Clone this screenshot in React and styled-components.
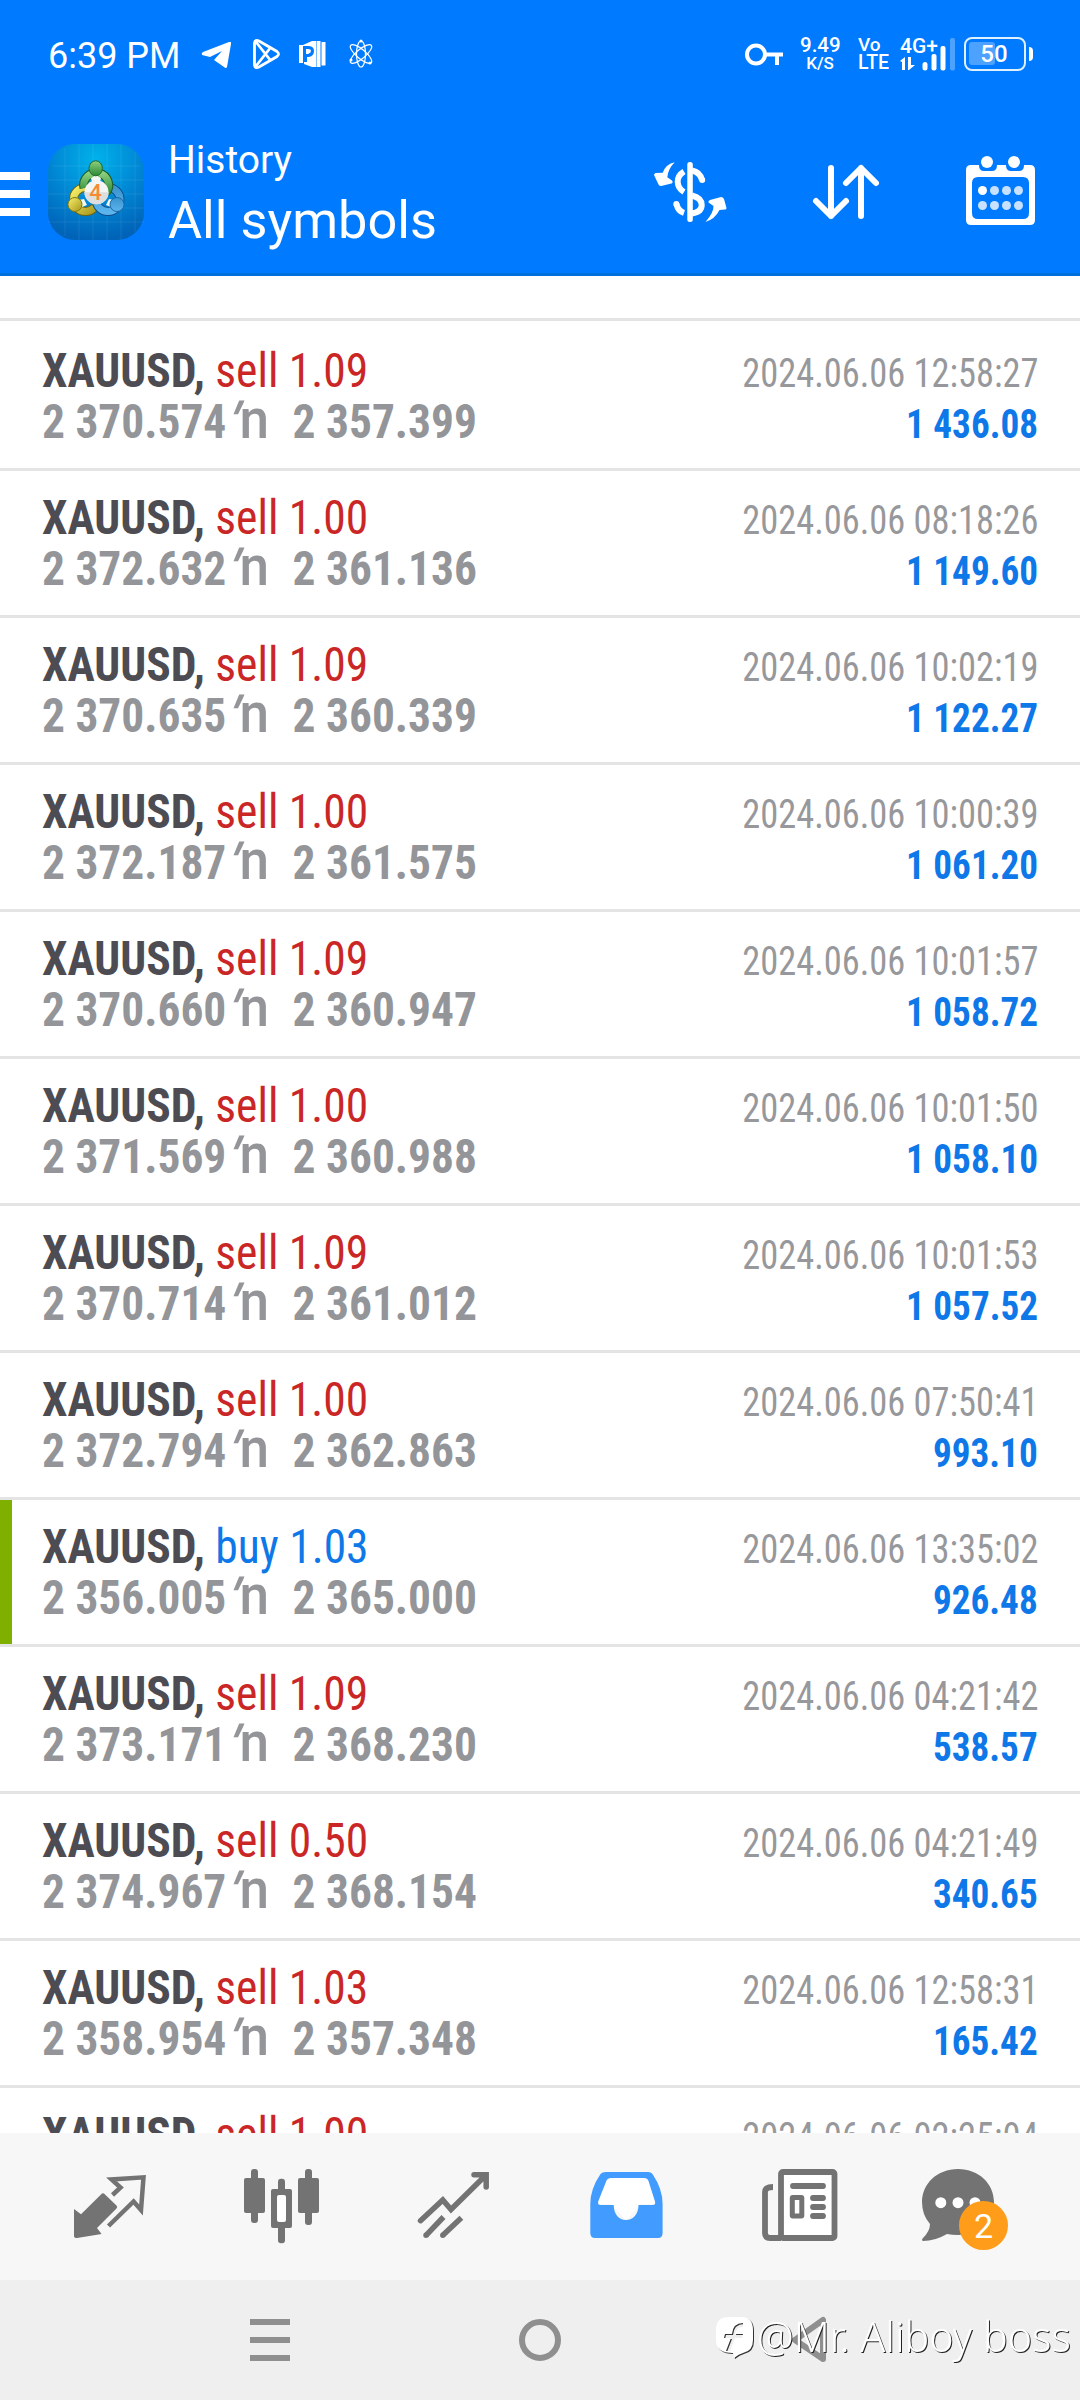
import React from 'react'
import styled, { createGlobalStyle } from 'styled-components'

const GlobalStyle = createGlobalStyle`
  body {
    margin: 0;
    font-family: Roboto, sans-serif;
  }
`

const Screen = styled.div`
  display: flex;
  flex-direction: column;
  width: 1080px;
  height: 2400px;
  overflow: hidden;
  background: #fff;
`

const Header = styled.header`
  flex: 0 0 273px;
  border-bottom: 3px solid #0070dd;
  background: #007aff;
  color: #fff;
`

const StatusBar = styled.div`
  display: flex;
  align-items: center;
  height: 108px;
  padding: 0 54px 0 48px;
`

const Clock = styled.span`
  width: 153px;
  margin-top: 4px;
  font-size: 36px;
  line-height: 42px;
  white-space: nowrap;
`

const StatusIcon = styled.svg`
  flex: none;
  width: ${({w}) => w}px;
  height: 36px;
  margin-left: ${({gap}) => gap || 0}px;
  overflow: visible;
`

const Spacer = styled.div`
  flex: 1;
`

const Stack = styled.div`
  display: flex;
  flex-direction: column;
  width: ${({w}) => w}px;
  margin-left: ${({gap}) => gap}px;
  text-align: ${({align}) => align || 'left'};
`

const Tiny = styled.span`
  font-size: ${({size}) => size}px;
  font-weight: 500;
  line-height: 18px;
  white-space: nowrap;
`

const Battery = styled.div`
  position: relative;
  display: flex;
  align-items: center;
  justify-content: center;
  box-sizing: border-box;
  width: 62px;
  height: 34px;
  margin-left: 9px;
  padding-right: 2px;
  border: 2.5px solid #dff0ff;
  border-radius: 8px;
  font-size: 24px;
  font-weight: 500;

  &::before {
    content: '';
    position: absolute;
    top: 3px;
    left: 3px;
    width: 26px;
    height: 23px;
    border-radius: 3px;
    background: rgba(255, 255, 255, 0.3);
  }

  &::after {
    content: '';
    position: absolute;
    top: 8px;
    right: -9px;
    width: 4px;
    height: 14px;
    border-radius: 0 4px 4px 0;
    background: #fff;
  }
`

const Toolbar = styled.div`
  display: flex;
  align-items: center;
  height: 165px;
  box-sizing: border-box;
  padding-right: 44px;
  padding-bottom: 1px;
`

const Burger = styled.div`
  display: flex;
  flex-direction: column;
  gap: 10px;
  width: 30px;
  margin-top: 8px;

  i {
    height: 8px;
    background: #fff;
  }
`

const AppLogo = styled.svg`
  width: 96px;
  height: 96px;
  margin-top: 4px;
  margin-left: 18px;
`

const Titles = styled.div`
  flex: 1;
  margin-top: 11px;
  margin-left: 24px;
`

const Subtitle = styled.div`
  font-size: 39px;
  line-height: 50px;
`

const Title = styled.div`
  font-size: 52.3px;
  line-height: 71px;
`

const Action = styled.svg`
  width: 74px;
  height: 74px;
  margin-top: 4px;
  margin-left: ${({gap}) => gap || 0}px;
  overflow: visible;
`

const List = styled.main`
  flex: 1;
  min-height: 0;
  overflow: hidden;
  padding-top: 42px;
`

const Row = styled.article`
  box-sizing: border-box;
  height: 147px;
  padding: 21px 42px 0;
  border-bottom: 3px solid #e4e4e4;
  box-shadow: ${({$marked}) => $marked ? 'inset 12px 0 0 #7fb000' : 'none'};

  &:first-child {
    height: 153px;
    border-top: 3px solid #e4e4e4;
    padding-top: 24px;
  }
`

const Line = styled.div`
  display: flex;
  align-items: baseline;
  justify-content: space-between;
  height: 51px;
  line-height: 51px;
  white-space: nowrap;
`

// condensed cut of Roboto, squeezed slightly further
const Narrow = styled.div`
  font-size: ${({size}) => size}px;
  font-stretch: 75%;
  transform: scaleX(${({scale}) => scale});
  transform-origin: ${({side}) => side || 'left'};
`

const Symbol = styled.b`
  color: #4d4c52;
`

const Deal = styled.span`
  color: ${({side}) => side === 'buy' ? '#0f78e8' : '#cb2626'};
`

const Prices = styled(Narrow)`
  color: #949599;
  font-weight: 700;
`

const Arrow = styled.span`
  margin: 0 25px 0 3px;
  font-size: 56px;
  font-stretch: 100%;
  font-weight: 500;
  line-height: 1px;
`

const Tick = styled.span`
  display: inline-block;
  margin-right: 3px;
  font-size: 50px;
  font-weight: 800;
  transform: skewX(-24deg);
`

const Time = styled(Narrow)`
  color: #97989b;
`

const Profit = styled(Narrow)`
  color: #0f78e8;
  font-weight: 700;
`

const TabBar = styled.nav`
  display: flex;
  flex: 0 0 147px;
  align-items: center;
  justify-content: space-between;
  padding: 0 68px;
  background: #f7f7f7;
`

const Tab = styled.div`
  position: relative;
  width: 84px;
  height: 84px;
  color: ${({$active}) => $active ? '#429bff' : '#737373'};

  svg {
    display: block;
    width: 84px;
    height: 84px;
    overflow: visible;
  }
`

const Badge = styled.span`
  position: absolute;
  top: 36px;
  left: 31px;
  width: 49px;
  height: 49px;
  border-radius: 50%;
  background: #ff9d1a;
  color: #fff;
  font-size: 34px;
  line-height: 50px;
  text-align: center;
`

const SystemBar = styled.footer`
  position: relative;
  display: flex;
  flex: 0 0 120px;
  align-items: center;
  justify-content: space-between;
  box-sizing: border-box;
  padding: 0 246px;
  background: #efefef;

  svg {
    width: 48px;
    height: 48px;
    color: #8f8f8f;
  }
`

const Watermark = styled.div`
  position: absolute;
  top: 32px;
  left: 715px;
  display: flex;
  align-items: center;
  color: #fff;
  font-family: 'Noto Sans', sans-serif;
  font-size: 41.3px;
  font-weight: 300;
  line-height: 48px;
  text-shadow: 1px 1px 0.5px #222;
  white-space: nowrap;
  will-change: transform;

  svg {
    width: 40px;
    height: 46px;
    margin-right: 2px;
    filter: drop-shadow(1px 1px 0.5px #333);
  }
`

const trades = [
  ['sell', '1.09', '2 370.574', '2 357.399', '12:58:27', '1 436.08'],
  ['sell', '1.00', '2 372.632', '2 361.136', '08:18:26', '1 149.60'],
  ['sell', '1.09', '2 370.635', '2 360.339', '10:02:19', '1 122.27'],
  ['sell', '1.00', '2 372.187', '2 361.575', '10:00:39', '1 061.20'],
  ['sell', '1.09', '2 370.660', '2 360.947', '10:01:57', '1 058.72'],
  ['sell', '1.00', '2 371.569', '2 360.988', '10:01:50', '1 058.10'],
  ['sell', '1.09', '2 370.714', '2 361.012', '10:01:53', '1 057.52'],
  ['sell', '1.00', '2 372.794', '2 362.863', '07:50:41', '993.10'],
  ['buy', '1.03', '2 356.005', '2 365.000', '13:35:02', '926.48'],
  ['sell', '1.09', '2 373.171', '2 368.230', '04:21:42', '538.57'],
  ['sell', '0.50', '2 374.967', '2 368.154', '04:21:49', '340.65'],
  ['sell', '1.03', '2 358.954', '2 357.348', '12:58:31', '165.42'],
  ['sell', '1.00', '', '', '02:25:04', ''],
]

const Trade = ({trade}) => {
  const [side, volume, open, close, time, profit] = trade
  return (
    <Row $marked={side === 'buy'}>
      <Line>
        <Narrow size={48} scale={0.948}>
          <Symbol>XAUUSD,</Symbol> <Deal side={side}>{side} {volume}</Deal>
        </Narrow>
        <Time size={40} scale={0.91} side="right">2024.06.06 {time}</Time>
      </Line>
      {open && (
        <Line>
          <Prices size={48} scale={0.946}>{open}<Arrow><Tick>'</Tick>n</Arrow>{close}</Prices>
          <Profit size={40} scale={0.93} side="right">{profit}</Profit>
        </Line>
      )}
    </Row>
  )
}

const Logo = () => (
  <AppLogo viewBox="0 0 96 96">
    <defs>
      <radialGradient id="sky" cx="50%" cy="15%" r="85%">
        <stop offset="0" stopColor="#00b2ea" />
        <stop offset="0.5" stopColor="#008ad6" />
        <stop offset="1" stopColor="#0063b8" />
      </radialGradient>
      <linearGradient id="green" x2="0" y2="1">
        <stop offset="0" stopColor="#8fd07f" />
        <stop offset="1" stopColor="#2b8a35" />
      </linearGradient>
      <linearGradient id="yellow" x2="1" y2="1">
        <stop offset="0" stopColor="#f7f06a" />
        <stop offset="1" stopColor="#a8961c" />
      </linearGradient>
      <linearGradient id="blue" x2="0" y2="1">
        <stop offset="0" stopColor="#3a94d0" />
        <stop offset="1" stopColor="#5cb4ec" />
      </linearGradient>
    </defs>
    <rect width="96" height="96" rx="27" fill="url(#sky)" />
    <path d="M17 4v88M31 0v96M45 0v96M59 0v96M73 0v96M87 8v80M4 22h88M0 36h96M0 50h96M0 64h96M0 78h96" stroke="#fff" strokeOpacity="0.08" />
    <g fill="none">
      <circle cx="37.500" cy="55.500" r="12" stroke="#6b6410" strokeWidth="9" />
      <circle cx="37.500" cy="55.500" r="12" stroke="url(#yellow)" strokeWidth="7" />
      <circle cx="60" cy="55.500" r="12" stroke="#0d4f8c" strokeWidth="9" />
      <circle cx="60" cy="55.500" r="12" stroke="url(#blue)" strokeWidth="7" />
      <path d="M36 44A12.500 12.500 0 1 1 58 49" stroke="#1b5c28" strokeWidth="9" />
      <path d="M36 44A12.500 12.500 0 1 1 58 49" stroke="url(#green)" strokeWidth="7" />
    </g>
    <path d="M43 34L48 31 53 34 52 38H44ZM31 56L36 55 39 61 34 63ZM66 56L61 55 58 61 63 63Z" fill="#f2f7f2" />
    <ellipse cx="47.700" cy="24.300" rx="6.700" ry="7.500" fill="url(#green)" stroke="#1f6a2c" />
    <circle cx="27" cy="60.500" r="7" fill="url(#yellow)" stroke="#85780f" />
    <circle cx="69" cy="60.500" r="7" fill="url(#blue)" stroke="#1a68a8" />
    <circle cx="48.500" cy="48.300" r="12" fill="#f4f4f4" />
    <path d="M36.500 48.300A12 12 0 0 0 60.500 48.300Z" fill="#dedede" />
    <text x="47.500" y="56" fill="#f58a33" fontSize="22" fontWeight="500" textAnchor="middle">4</text>
  </AppLogo>
)

const App = () => (
  <Screen>
    <GlobalStyle />
    <Header>
      <StatusBar>
        <Clock>6:39 PM</Clock>
        <StatusIcon w={31} viewBox="0 0 31 36">
          <path d="M30 6V8L26 31Q25 33 23 31L13 24 21 15 9 21 1 19Q0 17 2 16L28 6Z" fill="#fff" />
        </StatusIcon>
        <StatusIcon w={28} gap={21} viewBox="0 0 28 36" fill="none" stroke="#fff" strokeWidth="2.8">
          <path d="M1.500 7V29Q2 33 6 31L24 20.500Q27 18 24 15.500L6 5Q2 3 1.500 7ZM3 6L18 25M3 30L18 11" />
        </StatusIcon>
        <StatusIcon w={27} gap={18} viewBox="0 0 27 36">
          <path d="M0 9H4L13 5H17V31H13L5 28V26H8V21H10Q15 20 15 15T9 10H4V27H0ZM7 13H9Q12 13 12 15T9 18H7ZM17.500 5H21.500V31H17.500ZM22.500 6H26.500V29.500H22.500Z" fill="#fff" />
        </StatusIcon>
        <StatusIcon w={24} gap={23} viewBox="0 0 24 36" fill="none" stroke="#fff" strokeWidth="1.2">
          <ellipse cx="12" cy="18" rx="4.500" ry="13" />
          <ellipse cx="12" cy="18" rx="4.500" ry="13.500" transform="rotate(50 12 18)" />
          <ellipse cx="12" cy="18" rx="4.500" ry="13.500" transform="rotate(-50 12 18)" />
          <path d="M12 5h0M2 24h0M21 27h0" strokeWidth="3" strokeLinecap="round" />
        </StatusIcon>
        <Spacer />
        <StatusIcon w={39} viewBox="0 0 39 36" fill="none" stroke="#fff" strokeWidth="4">
          <circle cx="11" cy="18.500" r="9" />
          <path d="M20 18.500H38M32 18V29" />
        </StatusIcon>
        <Stack w={40} gap={16} align="center">
          <Tiny size={20.5}>9.49</Tiny>
          <Tiny size={17}>K/S</Tiny>
        </Stack>
        <Stack w={30} gap={18}>
          <Tiny size={19}>Vo</Tiny>
          <Tiny size={19.5}>LTE</Tiny>
        </Stack>
        <Stack w={55} gap={12}>
          <StatusIcon w={55} viewBox="0 0 55 36" fill="#fff">
            <text x="0" y="17" fontSize="21" fontWeight="500">4G+</text>
            <path d="M0 25L5 21V34H2V26ZM8 21H11V29H15L9 34H8Z" />
            <rect x="22.500" y="26" width="5" height="8.500" rx="2.500" />
            <rect x="31.500" y="18" width="5" height="16.500" rx="2" />
            <rect x="40.500" y="10" width="5" height="24.500" rx="2" />
            <rect x="50" y="2" width="5" height="32.500" rx="2" opacity="0.3" />
          </StatusIcon>
        </Stack>
        <Battery>50</Battery>
      </StatusBar>
      <Toolbar>
        <Burger><i /><i /><i /></Burger>
        <Logo />
        <Titles>
          <Subtitle>History</Subtitle>
          <Title>All symbols</Title>
        </Titles>
        <Action viewBox="0 0 74 74" fill="#fff">
          <path d="M20.700 7.300Q12 9 8.700 17.700L1.500 18Q0 19 0 20L4.500 29.500Q5.500 31 7 31L17.500 28.500Q19.500 27.500 18 25.500L13.300 22.300Q14 14 20.700 7.300ZM51.500 67Q60 57 59.500 51L54.500 47.500Q54 45.500 56 45L67 42Q69 42 70 44L72.500 53Q72.500 54.500 71 54.500L65.500 55Q61 64 51.500 67Z" />
          <path d="M30 16.500Q23.500 20.500 23.700 27Q24 33.500 30 37M38 15.500Q46 17 48 25M38 40.500Q47.700 43 47.700 50T38 58.500M22.500 49Q24 56 30 58" fill="none" stroke="#fff" strokeWidth="6" />
          <circle cx="48.200" cy="25" r="3" />
          <circle cx="22.300" cy="49" r="3" />
          <rect x="33.300" y="7" width="5.500" height="60" rx="2.500" />
        </Action>
        <Action gap={80} viewBox="0 0 74 74" fill="none" stroke="#fff" strokeWidth="6" strokeLinecap="round" strokeLinejoin="round">
          <path d="M23 13V61M8 46L23 61 38 46M53 61V13M38 28L53 13 68 28" />
        </Action>
        <Action gap={80} viewBox="0 0 74 74" fill="#fff">
          <path fillRule="evenodd" d="M9 10H17Q17 16 22 16H30Q35 16 35 10H44Q44 16 49 16H57Q62 16 62 10H68Q73 10 73 15V65Q73 70 68 70H9Q4 70 4 65V15Q4 10 9 10ZM16 22Q10 22 10 28V58Q10 64 16 64H61Q67 64 67 58V28Q67 22 61 22Z" />
          <circle cx="25" cy="7" r="6" />
          <circle cx="52" cy="7" r="6" />
          <circle cx="20.500" cy="35.500" r="4.500" />
          <g opacity="0.78">
            <circle cx="32.500" cy="35.500" r="4.500" />
            <circle cx="44.500" cy="35.500" r="4.500" />
            <circle cx="56.500" cy="35.500" r="4.500" />
            <circle cx="20.500" cy="50.500" r="4.500" />
            <circle cx="32.500" cy="50.500" r="4.500" />
            <circle cx="44.500" cy="50.500" r="4.500" />
            <circle cx="56.500" cy="50.500" r="4.500" />
          </g>
        </Action>
      </Toolbar>
    </Header>
    <List>
      {trades.map(trade => <Trade key={trade[4]} trade={trade} />)}
    </List>
    <TabBar>
      <Tab>
        <svg viewBox="68 2165 84 84" fill="currentColor">
          <path d="M74 2209L81 2214.300 101 2194.500Q103 2192 105 2194.500L116.500 2205.500Q118 2207 116.500 2208.500L97 2228 101.600 2234 77 2238Q74 2238 74 2236Z" />
          <path d="M112.500 2195L120.500 2187.500 111.600 2179.500 143.500 2177.300 141 2210 133.600 2201.500 108.500 2226" fill="none" stroke="currentColor" strokeWidth="4.500" />
        </svg>
      </Tab>
      <Tab>
        <svg viewBox="240 2165 84 84" fill="currentColor">
          <rect x="244" y="2178" width="21" height="35" rx="2" />
          <rect x="251" y="2169" width="7" height="54" rx="3" />
          <rect x="271" y="2189" width="21" height="39" rx="2" />
          <rect x="278" y="2178.700" width="7" height="64.500" rx="3" />
          <rect x="277" y="2195" width="9" height="27" rx="2" fill="#fff" />
          <rect x="298" y="2178" width="21" height="35" rx="2" />
          <rect x="305" y="2169" width="7" height="56" rx="3" />
        </svg>
      </Tab>
      <Tab>
        <svg viewBox="412 2165 84 84" fill="none" stroke="currentColor" strokeWidth="5.500">
          <path d="M420.500 2220.700L442.800 2200 451 2209.500 486 2175M474 2174.700H486.200V2187" strokeLinecap="round" />
          <path d="M443.500 2217L426 2235.300M461.400 2217.700L442.800 2235.300" />
          <path d="M426 2235.300h0M442.800 2235.300h0" strokeLinecap="round" />
        </svg>
      </Tab>
      <Tab $active>
        <svg viewBox="584 2165 84 84" fill="currentColor">
          <path d="M606 2175H647L658 2204H640L626 2221 612 2204H596Z" fill="#fff" />
          <path fillRule="evenodd" d="M606 2172H648Q651 2172 652.500 2174Q662.600 2189 662.600 2204V2233Q662.600 2238 658 2238H595Q590.300 2238 590.300 2233V2204Q590.300 2189 600.500 2174Q602 2172 606 2172ZM611 2178Q607.500 2178 606.500 2180.500L598.200 2201.500Q597.500 2205 600.500 2205H613.700C613.700 2214 619 2220 626 2220S638.500 2214 638.500 2205H652.500Q656 2205 655 2201.500L648.500 2181Q647.500 2178 644 2178Z" />
        </svg>
      </Tab>
      <Tab>
        <svg viewBox="756 2165 84 84" fill="none" stroke="currentColor" strokeWidth="5.800">
          <rect x="781" y="2172" width="53.500" height="66" rx="2" fill="#fff" />
          <path d="M781 2238H770Q765 2238 765 2233V2192Q765 2187 773 2187" />
          <path d="M793 2186H823M813 2198H823M813 2207H823M813 2216H823" strokeLinecap="round" />
          <rect x="792.300" y="2197.500" width="9.500" height="18.500" rx="0.500" strokeWidth="5" />
        </svg>
      </Tab>
      <Tab>
        <svg viewBox="928 2165 84 84" fill="currentColor">
          <path d="M958 2169C979 2169 994 2184 994 2202S979 2235 958 2235Q952 2235 947 2234Q935 2241 923 2241Q921 2240 923 2238Q930 2231 930 2224Q922 2215 922 2202C922 2184 937 2169 958 2169Z" />
          <g fill="#fff">
            <circle cx="940.800" cy="2202.700" r="5.500" />
            <circle cx="958" cy="2202.700" r="5.500" />
            <circle cx="975" cy="2202.700" r="5.500" />
          </g>
        </svg>
        <Badge>2</Badge>
      </Tab>
    </TabBar>
    <SystemBar>
      <svg viewBox="0 0 48 48" fill="currentColor">
        <path d="M4 3H44V9H4ZM4 21H44V27H4ZM4 39H44V45H4Z" />
      </svg>
      <svg viewBox="0 0 48 48" fill="none" stroke="currentColor" strokeWidth="6">
        <circle cx="24" cy="24" r="18" />
      </svg>
      <svg viewBox="0 0 48 48" fill="none" stroke="currentColor" strokeWidth="6" strokeLinejoin="round">
        <path d="M37 4V43L9 24Z" />
      </svg>
      <Watermark>
        <svg viewBox="0 0 40 46">
          <path fillRule="evenodd" d="M14 4H26Q38 4 38 17V27Q38 38 28 40Q24 41 19 45L18 40Q1 40 1 27V17Q1 4 14 4ZM28 10Q18 10 17 21H10L9 25H16L11 38H15L20 25H27L28 21H20Q21 14 28 14Z" fill="#fff" />
        </svg>
        @Mr. Aliboy boss
      </Watermark>
    </SystemBar>
  </Screen>
)

export default App
